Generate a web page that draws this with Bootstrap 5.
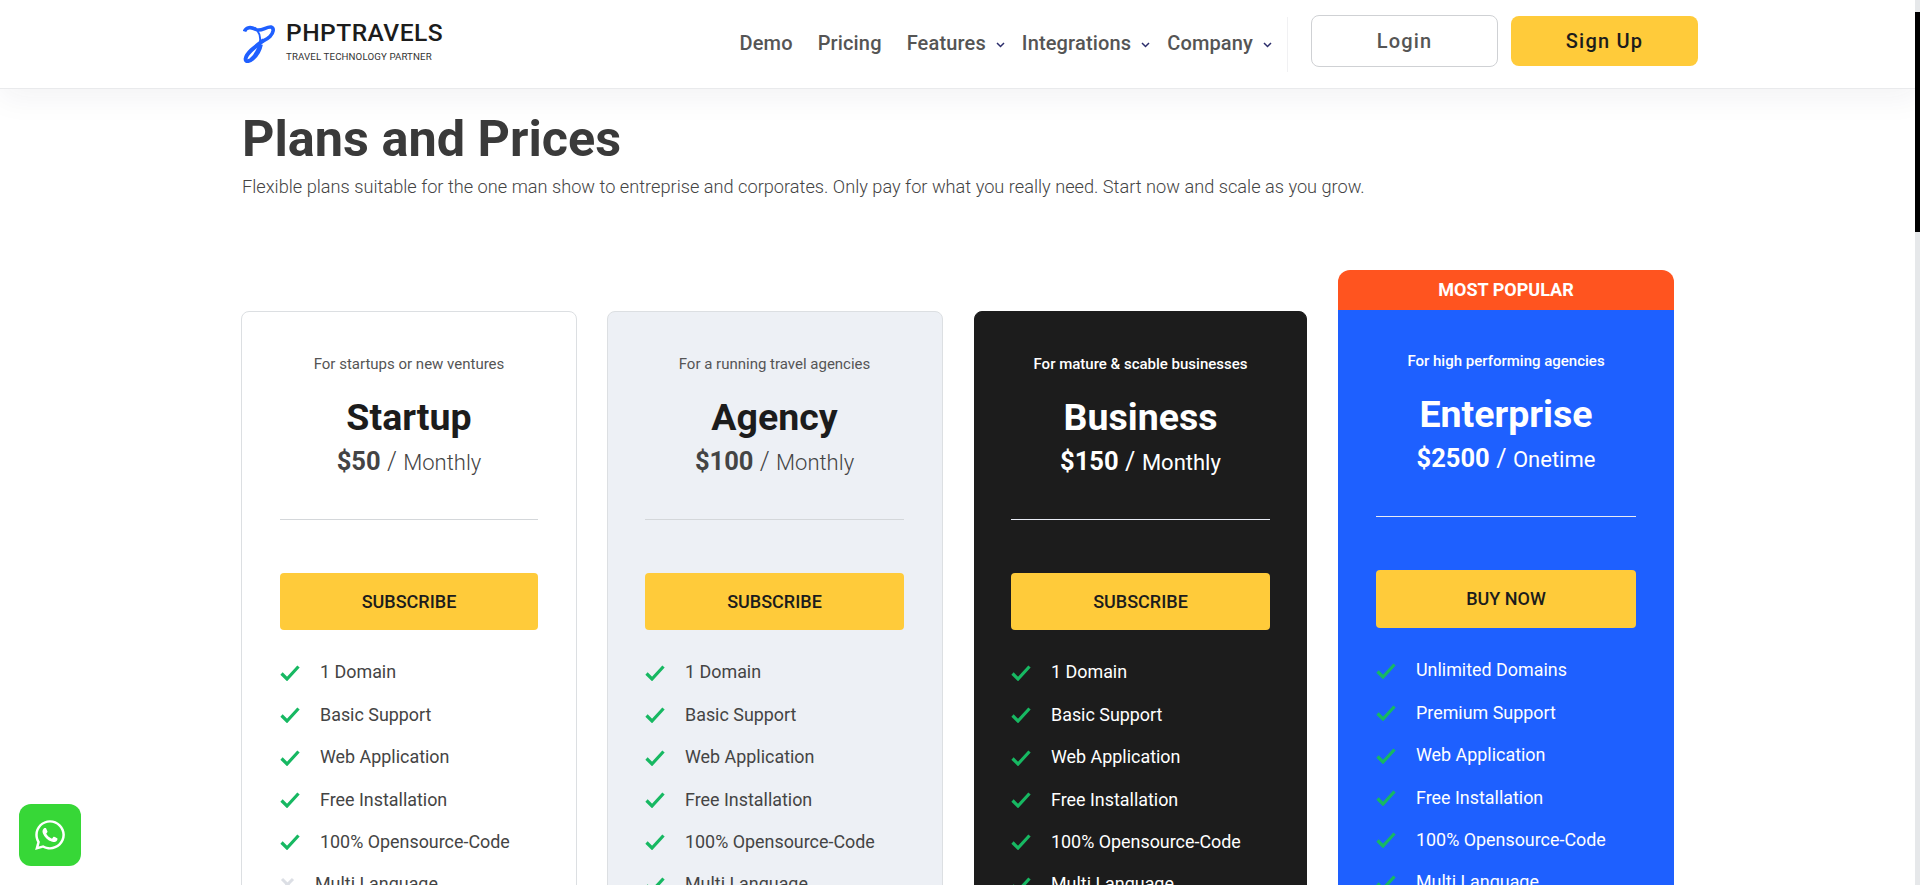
<!DOCTYPE html>
<html lang="en">
<head>
    <meta charset="UTF-8">
    <meta name="viewport" content="width=device-width, initial-scale=1.0">
    <title>Plans and Prices</title>
    <link href="https://cdn.jsdelivr.net/npm/bootstrap@5.3.0/dist/css/bootstrap.min.css" rel="stylesheet">
    <style>
        html, body { height: 885px; overflow: hidden; }
        body { font-family: Roboto, "Liberation Sans", sans-serif; color: #444; background: #fff; }

        /* header */
        .top-bar { height: 89px; padding: 0; background: #fff; border-bottom: 1px solid #e9eaec; box-shadow: 0 8px 32px rgba(30, 40, 70, .06); }
        .top-inner { width: 1455px; margin-left: 243px; height: 88px; }
        .logo-link { margin-bottom: 5px; }
        .logo-mark { width: 32px; height: 38px; margin-right: 11px; margin-top: 5px; }
        .logo-name { font-size: 24.6px; font-weight: 500; letter-spacing: .45px; line-height: 26px; color: #1c1c1c; }
        .logo-sub { font-size: 9.7px; line-height: 12px; letter-spacing: .12px; color: #333; margin-top: 5px; }
        .menu-link { font-size: 20px; font-weight: 500; letter-spacing: .15px; color: #555; line-height: 24px; padding: 0; margin-bottom: 2px; }
        .menu-link:hover { color: #333; }
        .menu-gap { margin-right: 25px; }
        .chev { width: 9px; height: 6px; margin-left: 10px; margin-right: 17px; margin-top: 2px; }
        .chev-last { margin-right: 0; }
        .menu-rule { width: 1px; height: 55px; background: #f1f1f3; margin: 0 23px 0 15px; }
        .btn-login, .btn-signup { width: 187px; font-size: 20px; font-weight: 500; letter-spacing: 1.2px; border-radius: 8px; margin-bottom: 6px; }
        .btn-login { height: 52px; color: #555; background: #fff; border: 1px solid #cfd1d4; }
        .btn-signup { height: 50px; color: #1c1c1c; background: #ffcb3a; border: 0; margin-left: 13px; }

        /* intro */
        .page-body { width: 1456px; margin-left: 242px; }
        .page-title { font-size: 50.4px; font-weight: 700; line-height: 56px; color: #3a3a3a; margin: 22px 0 0; }
        .page-lead { font-size: 18.2px; font-weight: 300; line-height: 26px; color: #444; margin: 7px 0 0; }

        /* pricing */
        .price-grid { grid-template-columns: 335px 336px 333px 336px; column-gap: 31px; align-items: start; margin: 70px 0 0 -1px; }
        .plan-tier { margin-top: 41px; }
        .plan-wide { margin-right: -1px; }
        .plan-box { background: #fff; border: 1px solid #dcdfe2; border-radius: 8px; padding: 42px 38px 40px; height: 760px; }
        .plan-grey { background: #edf0f5; padding-left: 37px; }
        .plan-dark { background: #1c1c1c; border-color: #1c1c1c; color: #fff; padding-left: 36px; padding-right: 36px; }
        .plan-blue { background: #1e60ff; border: 0; border-radius: 0 0 8px 8px; color: #fff; padding-top: 41px; }
        .hot-tag { height: 40px; line-height: 40px; font-size: 18px; font-weight: 700; color: #fff; text-align: center; background: #ff541f; border-radius: 12px 12px 0 0; }
        .plan-for { font-size: 15px; line-height: 21px; margin: 0 0 21px; color: #555; font-weight: 400; }
        .plan-dark .plan-for, .plan-blue .plan-for { color: #fff; font-weight: 500; }
        .plan-name { font-size: 37.5px; font-weight: 700; line-height: 43px; margin: 0 0 4px; color: #1c1c1c; }
        .plan-dark .plan-name, .plan-blue .plan-name { color: #fff; }
        .plan-cost { font-size: 22px; line-height: 36px; font-weight: 300; color: #444; }
        .plan-cost b { font-size: 25.5px; font-weight: 700; color: #444; }
        .plan-cost span { font-size: 25px; margin: 0 1px; }
        .plan-dark .plan-cost, .plan-blue .plan-cost, .plan-dark .plan-cost b, .plan-blue .plan-cost b { color: #fff; }
        .plan-dark .plan-cost, .plan-blue .plan-cost { font-weight: 400; }
        .plan-rule { margin: 38px 0 53px; border: 0; border-top: 1px solid #d4d7da; opacity: 1; }
        .plan-dark .plan-rule, .plan-blue .plan-rule { border-top-color: #e8ecf5; }
        .btn-plan { height: 57px; font-size: 18px; font-weight: 500; line-height: 57px; padding: 0; background: #ffcb3a; color: #1c1c1c; border: 0; border-radius: 4px; }
        .plan-blue .btn-plan { height: 58px; line-height: 58px; }
        .feat-list { margin: 21.6px 0 0; }
        .plan-blue .feat-list { margin-top: 21.6px; }
        .feat-list li { height: 42.4px; gap: 20px; font-size: 17.9px; color: #444; font-weight: 400; }
        .plan-dark .feat-list li, .plan-blue .feat-list li { color: #fff; }
        .tick { width: 20px; height: 16px; flex: none; }
        .cross { width: 15px; height: 15px; flex: none; }

        /* overlays */
        .chat-btn { position: fixed; left: 19px; top: 804px; width: 62px; height: 62px; background: #37d737; border-radius: 12px; }
        .chat-btn svg { width: 34px; height: 34px; fill: #fff; }
        .fake-track { position: fixed; right: 0; top: 0; width: 5px; height: 885px; background: #e6e8ea; }
        .fake-thumb { position: absolute; left: 0; top: 12px; width: 5px; height: 220px; background: #000; }
    </style>
</head>
<body>
    <svg width="0" height="0" class="d-block position-absolute">
        <symbol id="i-tick" viewBox="0 0 20 16"><path d="M1.500 8.500 7 14 18.500 1.500" fill="none" stroke="#17b862" stroke-width="3.200"/></symbol>
        <symbol id="i-cross" viewBox="0 0 15 15"><path d="M2 2 13 13M13 2 2 13" fill="none" stroke="#dcdfe5" stroke-width="3"/></symbol>
        <symbol id="i-chev" viewBox="0 0 9 6"><path d="M1 1 4.500 4.500 8 1" fill="none" stroke="#2b2d6b" stroke-width="1.500"/></symbol>
    </svg>

    <!-- Header -->
    <nav class="navbar top-bar">
        <div class="top-inner d-flex align-items-center">
            <a href="#" class="logo-link d-flex align-items-center text-decoration-none">
                <svg class="logo-mark" viewBox="0 0 32 38" aria-hidden="true">
                    <path d="M1.500 6.500C3 2 8 1.500 13 4.500c5 2.500 10-3 15-2.500 3.500 1 2.500 6-1 9.500-2.500 2.500-5 3.500-8 5" fill="none" stroke="#1f5fff" stroke-width="3.600"/>
                    <path d="M14 5c3 4 4 9 2.500 14-2 6-5 12-9 15" fill="none" stroke="#1f5fff" stroke-width="2"/>
                    <path d="M21 15C13 21 3 28 2.500 34c0 3.500 4 2.500 7.500-.5 5-4 7-9 8-14" fill="none" stroke="#1f5fff" stroke-width="3.800"/>
                </svg>
                <div>
                    <div class="logo-name">PHPTRAVELS</div>
                    <div class="logo-sub">TRAVEL TECHNOLOGY PARTNER</div>
                </div>
            </a>
            <div class="d-flex align-items-center ms-auto">
                <a href="#" class="nav-link menu-link menu-gap">Demo</a>
                <a href="#" class="nav-link menu-link menu-gap">Pricing</a>
                <a href="#" class="nav-link menu-link">Features</a>
                <svg class="chev"><use href="#i-chev"/></svg>
                <a href="#" class="nav-link menu-link">Integrations</a>
                <svg class="chev"><use href="#i-chev"/></svg>
                <a href="#" class="nav-link menu-link">Company</a>
                <svg class="chev chev-last"><use href="#i-chev"/></svg>
                <div class="menu-rule"></div>
                <button class="btn btn-login">Login</button>
                <button class="btn btn-signup">Sign Up</button>
            </div>
        </div>
    </nav>

    <div class="page-body">
        <h1 class="page-title">Plans and Prices</h1>
        <p class="page-lead">Flexible plans suitable for the one man show to entreprise and corporates. Only pay for what you really need. Start now and scale as you grow.</p>

        <div class="d-grid price-grid">
            <!-- Startup -->
            <div class="plan-tier plan-wide">
                <div class="plan-box text-center">
                    <p class="plan-for">For startups or new ventures</p>
                    <h2 class="plan-name">Startup</h2>
                    <div class="plan-cost"><b>$50</b> <span>/</span> Monthly</div>
                    <hr class="plan-rule">
                    <a href="#" class="btn btn-plan d-block">SUBSCRIBE</a>
                    <ul class="list-unstyled feat-list text-start">
                        <li class="d-flex align-items-center"><svg class="tick"><use href="#i-tick"/></svg>1 Domain</li>
                        <li class="d-flex align-items-center"><svg class="tick"><use href="#i-tick"/></svg>Basic Support</li>
                        <li class="d-flex align-items-center"><svg class="tick"><use href="#i-tick"/></svg>Web Application</li>
                        <li class="d-flex align-items-center"><svg class="tick"><use href="#i-tick"/></svg>Free Installation</li>
                        <li class="d-flex align-items-center"><svg class="tick"><use href="#i-tick"/></svg>100% Opensource-Code</li>
                        <li class="d-flex align-items-center"><svg class="cross"><use href="#i-cross"/></svg>Multi Language</li>
                    </ul>
                </div>
            </div>

            <!-- Agency -->
            <div class="plan-tier">
                <div class="plan-box plan-grey text-center">
                    <p class="plan-for">For a running travel agencies</p>
                    <h2 class="plan-name">Agency</h2>
                    <div class="plan-cost"><b>$100</b> <span>/</span> Monthly</div>
                    <hr class="plan-rule">
                    <a href="#" class="btn btn-plan d-block">SUBSCRIBE</a>
                    <ul class="list-unstyled feat-list text-start">
                        <li class="d-flex align-items-center"><svg class="tick"><use href="#i-tick"/></svg>1 Domain</li>
                        <li class="d-flex align-items-center"><svg class="tick"><use href="#i-tick"/></svg>Basic Support</li>
                        <li class="d-flex align-items-center"><svg class="tick"><use href="#i-tick"/></svg>Web Application</li>
                        <li class="d-flex align-items-center"><svg class="tick"><use href="#i-tick"/></svg>Free Installation</li>
                        <li class="d-flex align-items-center"><svg class="tick"><use href="#i-tick"/></svg>100% Opensource-Code</li>
                        <li class="d-flex align-items-center"><svg class="tick"><use href="#i-tick"/></svg>Multi Language</li>
                    </ul>
                </div>
            </div>

            <!-- Business -->
            <div class="plan-tier">
                <div class="plan-box plan-dark text-center">
                    <p class="plan-for">For mature &amp; scable businesses</p>
                    <h2 class="plan-name">Business</h2>
                    <div class="plan-cost"><b>$150</b> <span>/</span> Monthly</div>
                    <hr class="plan-rule">
                    <a href="#" class="btn btn-plan d-block">SUBSCRIBE</a>
                    <ul class="list-unstyled feat-list text-start">
                        <li class="d-flex align-items-center"><svg class="tick"><use href="#i-tick"/></svg>1 Domain</li>
                        <li class="d-flex align-items-center"><svg class="tick"><use href="#i-tick"/></svg>Basic Support</li>
                        <li class="d-flex align-items-center"><svg class="tick"><use href="#i-tick"/></svg>Web Application</li>
                        <li class="d-flex align-items-center"><svg class="tick"><use href="#i-tick"/></svg>Free Installation</li>
                        <li class="d-flex align-items-center"><svg class="tick"><use href="#i-tick"/></svg>100% Opensource-Code</li>
                        <li class="d-flex align-items-center"><svg class="tick"><use href="#i-tick"/></svg>Multi Language</li>
                    </ul>
                </div>
            </div>

            <!-- Enterprise -->
            <div>
                <div class="hot-tag">MOST POPULAR</div>
                <div class="plan-box plan-blue text-center">
                    <p class="plan-for">For high performing agencies</p>
                    <h2 class="plan-name">Enterprise</h2>
                    <div class="plan-cost"><b>$2500</b> <span>/</span> Onetime</div>
                    <hr class="plan-rule">
                    <a href="#" class="btn btn-plan d-block">BUY NOW</a>
                    <ul class="list-unstyled feat-list text-start">
                        <li class="d-flex align-items-center"><svg class="tick"><use href="#i-tick"/></svg>Unlimited Domains</li>
                        <li class="d-flex align-items-center"><svg class="tick"><use href="#i-tick"/></svg>Premium Support</li>
                        <li class="d-flex align-items-center"><svg class="tick"><use href="#i-tick"/></svg>Web Application</li>
                        <li class="d-flex align-items-center"><svg class="tick"><use href="#i-tick"/></svg>Free Installation</li>
                        <li class="d-flex align-items-center"><svg class="tick"><use href="#i-tick"/></svg>100% Opensource-Code</li>
                        <li class="d-flex align-items-center"><svg class="tick"><use href="#i-tick"/></svg>Multi Language</li>
                    </ul>
                </div>
            </div>
        </div>
    </div>

    <a href="#" class="chat-btn d-flex align-items-center justify-content-center" aria-label="WhatsApp">
        <svg viewBox="0 0 448 512"><path d="M380.900 97.100C339 55.100 283.200 32 223.900 32c-122.400 0-222 99.600-222 222 0 39.100 10.200 77.300 29.600 111L0 480l117.700-30.900c32.400 17.700 68.900 27 106.100 27h.1c122.300 0 224.100-99.600 224.100-222 0-59.300-25.200-115-67.100-157zm-157 341.600c-33.200 0-65.700-8.900-94-25.700l-6.700-4-69.800 18.300L72 359.200l-4.400-7c-18.500-29.400-28.200-63.300-28.200-98.200 0-101.700 82.800-184.500 184.600-184.500 49.300 0 95.600 19.200 130.400 54.100 34.800 34.900 56.200 81.200 56.100 130.500 0 101.800-84.900 184.600-186.600 184.600zm101.200-138.200c-5.500-2.800-32.800-16.200-37.900-18-5.100-1.900-8.800-2.800-12.500 2.800-3.700 5.600-14.300 18-17.600 21.800-3.200 3.700-6.500 4.200-12 1.400-32.600-16.300-54-29.100-75.500-66-5.700-9.800 5.700-9.100 16.300-30.300 1.800-3.700.9-6.900-.5-9.700-1.400-2.800-12.500-30.100-17.100-41.200-4.500-10.800-9.100-9.300-12.500-9.500-3.200-.2-6.900-.2-10.600-.2-3.700 0-9.700 1.400-14.800 6.900-5.100 5.600-19.400 19-19.400 46.300 0 27.300 19.900 53.700 22.600 57.400 2.800 3.700 39.100 59.700 94.800 83.800 35.200 15.200 49 16.500 66.600 13.900 10.700-1.600 32.800-13.400 37.400-26.400 4.600-13 4.600-24.100 3.200-26.400-1.300-2.500-5-3.900-10.500-6.600z"/></svg>
    </a>

    <div class="fake-track"><div class="fake-thumb"></div></div>

    <script src="https://cdn.jsdelivr.net/npm/bootstrap@5.3.0/dist/js/bootstrap.bundle.min.js"></script>
</body>
</html>
